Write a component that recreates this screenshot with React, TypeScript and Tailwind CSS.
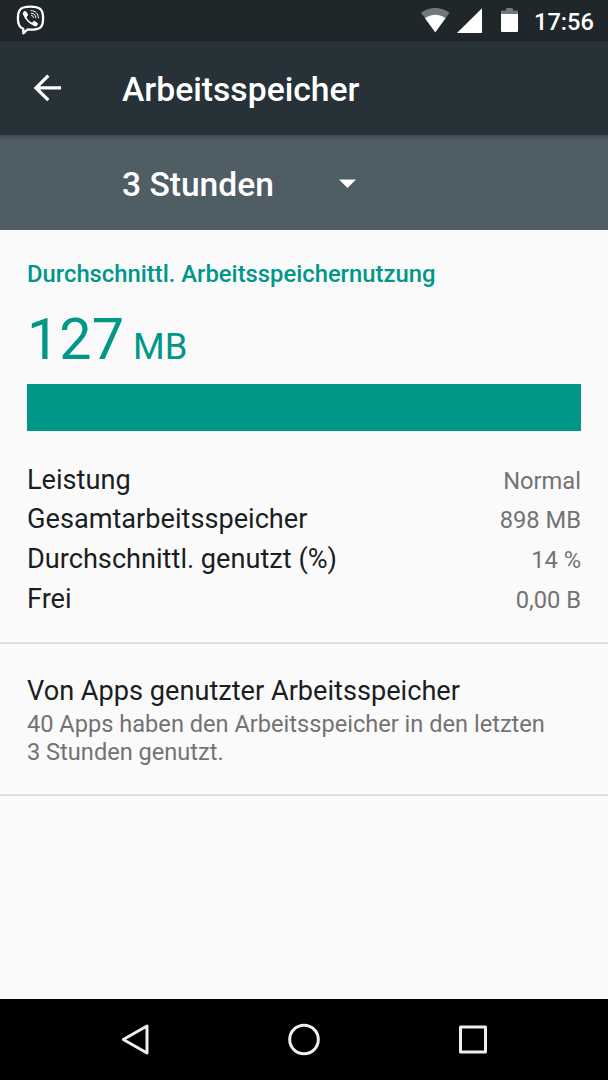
import React from "react";

const stats = [
  { label: "Leistung", value: "Normal" },
  { label: "Gesamtarbeitsspeicher", value: "898 MB" },
  { label: "Durchschnittl. genutzt (%)", value: "14 %" },
  { label: "Frei", value: "0,00 B" },
];

function StatusBar() {
  return (
    <div className="flex h-[41px] shrink-0 items-start bg-[#20272a] pr-[14px] pl-4">
      <svg className="mt-[5px] h-[30px] w-[29px]" viewBox="0 0 29 30" fill="none">
        <path
          d="M14.5 1.600C5.500 1.600 1.900 3.600 1.900 13.400c0 6 1.600 9 5.400 10.500v4.400l4.200-3.800c.9.100 2 .100 3 .100 9 0 12.600-1.800 12.600-11.200S23.500 1.600 14.500 1.600Z"
          stroke="#fff"
          strokeWidth="2.300"
          strokeLinejoin="round"
        />
        <path
          d="M8.300 6.300c1-.7 1.800-.2 3.500 2.600.6 1 .3 1.600-.5 2.200-.8.700-.7 1.200-.2 2.200.9 1.800 2.100 3 3.900 3.900.9.400 1.300.3 1.900-.4.700-.9 1.300-1 2.400-.4 2.700 1.700 3 2.200 2.300 3.300-1 1.500-2 2-3.300 1.400C13 18.800 9.300 14.900 7 9.500c-.6-1.400 0-2.300 1.300-3.200Z"
          fill="#fff"
        />
        <path
          d="M15 5.600c4.600.1 7.300 3 7.400 7.400M15.300 8.200c2.900.2 4.300 1.700 4.500 4.500M15.600 10.500c1.200.1 1.700.700 1.800 1.900"
          stroke="#fff"
          strokeWidth="1"
          strokeLinecap="round"
        />
      </svg>
      <div className="grow" />
      <svg className="mt-[8px] h-[25px] w-[98px]" viewBox="0 0 98 25">
        <path d="M0 4.800C8-1.500 20.500-1.500 28.500 4.800L14.250 24.300Z" fill="#71777a" />
        <path d="M4 10.300C10 5.500 18.500 5.500 24.500 10.300L14.250 24.300Z" fill="#fff" />
        <path d="M61 .2V25H36Z" fill="#fff" />
        <path d="M80 6V3.500q0-1 1-1h4V1q0-1 1-1h5q1 0 1 1v1.500h4q1 0 1 1V6Z" fill="#71777a" />
        <path d="M80 6h17v17q0 1-1 1H81q-1 0-1-1Z" fill="#fff" />
      </svg>
      <span className="ml-[15px] w-[60px] pt-[8px] text-[23.6px] leading-[28px] font-medium whitespace-nowrap text-white">17:56</span>
    </div>
  );
}

function NavBar() {
  return (
    <div className="flex h-[81px] shrink-0 items-center justify-between bg-black px-[119px] pb-[2px]">
      <svg className="h-9 w-8" viewBox="0 0 32 36" fill="none" stroke="#eee" strokeWidth="3" strokeLinejoin="round">
        <path d="M4.300 18.500 28 5v27Z" />
      </svg>
      <svg className="h-9 w-9" viewBox="0 0 36 36" fill="none" stroke="#eee" strokeWidth="3">
        <circle cx="18" cy="18.500" r="14.300" />
      </svg>
      <svg className="h-9 w-8" viewBox="0 0 32 36" fill="none" stroke="#eee" strokeWidth="3" strokeLinejoin="round">
        <path d="M3.500 6h25v25h-25z" />
      </svg>
    </div>
  );
}

export default function App() {
  return (
    <div className="flex h-[1080px] w-[608px] flex-col overflow-hidden bg-[#fafafa] font-['Roboto',sans-serif]">
      <StatusBar />
      <header className="z-10 flex h-[94px] shrink-0 items-center bg-[#263238] text-white shadow-[0_1px_5px_rgba(0,0,0,0.35)]">
        <svg className="ml-[33px] h-7 w-[29px]" viewBox="0 0 29 28" fill="none" stroke="#fff" strokeWidth="3.300">
          <path d="M15.300 1.600 3 13.900l12.300 12.300M3 13.900h25" />
        </svg>
        <h1 className="ml-[60px] pt-[3px] text-[33.7px] leading-10 font-medium whitespace-nowrap">Arbeitsspeicher</h1>
      </header>
      <div className="flex h-[94.500px] shrink-0 items-center bg-[#4f5d64] pl-[122px] text-white">
        <span className="w-[217px] pt-[5.500px] text-[33.6px] leading-10 font-medium whitespace-nowrap">3 Stunden</span>
        <svg className="mt-[1.500px] h-[9px] w-[17px]" viewBox="0 0 17 9" fill="#fff">
          <path d="M0 .5h17L8.500 9Z" />
        </svg>
      </div>
      <main className="grow">
        <section className="h-[414px] border-b-2 border-[#dedede] px-[27px] pt-[30px]">
          <h2 className="text-[23.8px] leading-[28px] font-medium whitespace-nowrap text-[#009688]">
            Durchschnittl. Arbeitsspeichernutzung
          </h2>
          <div className="flex h-[96px] items-baseline pt-[18px] text-[#009688]">
            <span className="text-[57.500px] leading-[68px]">127</span>
            <span className="ml-[9px] text-[36.300px]">MB</span>
          </div>
          <div className="h-[47px] bg-[#009688]" />
          <dl className="pt-[29px]">
            {stats.map((s) => (
              <div key={s.label} className="flex h-[39.750px] items-baseline justify-between whitespace-nowrap">
                <dt className="text-[27.150px] leading-[40px] text-[#1b1e1f]">{s.label}</dt>
                <dd className="text-[23.700px] text-[#737373]">{s.value}</dd>
              </div>
            ))}
          </dl>
        </section>
        <section className="h-[152px] border-b-2 border-[#dedede] px-[27px] pt-[31px]">
          <h3 className="text-[27.150px] leading-8 whitespace-nowrap text-[#1b1e1f]">Von Apps genutzter Arbeitsspeicher</h3>
          <p className="pt-[3px] text-[23.6px] leading-7 whitespace-nowrap text-[#737373]">
            40 Apps haben den Arbeitsspeicher in den letzten
            <br />3 Stunden genutzt.
          </p>
        </section>
      </main>
      <NavBar />
    </div>
  );
}
